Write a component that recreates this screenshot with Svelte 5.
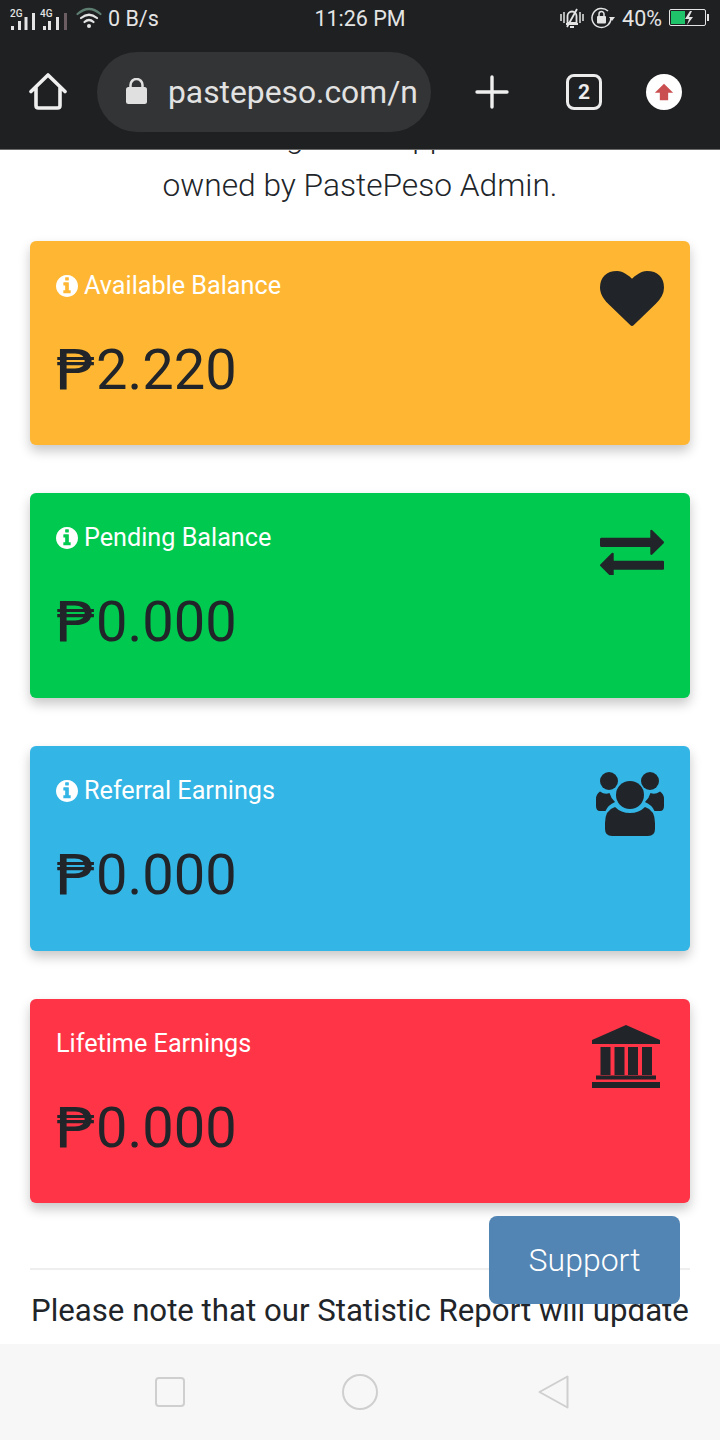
<script>
  const heart = "M896 1664q-26 0-44-18l-624-602q-10-8-27.5-26t-55.5-65.5-68-97.5-53.5-121-23.5-138q0-220 127-344t351-124q62 0 126.5 21.5t120 58 95.5 68.5 76 68q36-36 76-68t95.5-68.5 120-58 126.5-21.5q224 0 351 124t127 344q0 221-229 450l-623 600q-18 18-44 18z";
  const exchange = "M1792 1184v192q0 13-9.5 22.5t-22.5 9.5h-1376v192q0 13-9.5 22.5t-22.5 9.5q-12 0-24-10l-319-320q-9-9-9-22 0-14 9-23l320-320q9-9 23-9 13 0 22.5 9.5t9.5 22.5v192h1376q13 0 22.5 9.5t9.5 22.5zm0-544q0 14-9 23l-320 320q-9 9-23 9-13 0-22.5-9.5t-9.5-22.5v-192h-1376q-13 0-22.5-9.5t-9.5-22.5v-192q0-13 9.5-22.5t22.5-9.5h1376v-192q0-14 9-23t23-9q12 0 24 10l319 319q9 9 9 23z";
  const info = "M1152 1376v-160q0-14-9-23t-23-9h-96v-512q0-14-9-23t-23-9h-320q-14 0-23 9t-9 23v160q0 14 9 23t23 9h96v320h-96q-14 0-23 9t-9 23v160q0 14 9 23t23 9h448q14 0 23-9t9-23zm-128-896v-160q0-14-9-23t-23-9h-192q-14 0-23 9t-9 23v160q0 14 9 23t23 9h192q14 0 23-9t9-23zm640 416q0 209-103 385.5t-279.5 279.5-385.5 103-385.5-103-279.5-279.5-103-385.5 103-385.5 279.5-279.5 385.5-103 385.5 103 279.5 279.5 103 385.5z";
  const cards = [
    { cls: "amber", label: "Available Balance", value: "2.220", info: true, icon: "heart" },
    { cls: "green", label: "Pending Balance", value: "0.000", info: true, icon: "exchange" },
    { cls: "blue", label: "Referral Earnings", value: "0.000", info: true, icon: "users" },
    { cls: "red", label: "Lifetime Earnings", value: "0.000", info: false, icon: "bank" }
  ];
</script>

<div class="phone">
  <header class="chrome">
    <div class="status">
      <div class="status-left">
        <svg class="signal" width="58" height="28" viewBox="0 0 58 28" fill="#e4e4e4">
          <text x="0" y="13" class="net">2G</text>
          <rect x="1" y="22" width="3" height="4"/><rect x="8" y="17" width="3" height="9"/><rect x="14.500" y="13" width="3" height="13"/><rect x="22" y="9" width="3" height="17"/>
          <text x="30" y="13" class="net">4G</text>
          <rect x="33" y="22" width="3" height="4"/><rect x="38" y="17" width="3" height="9"/><rect x="46" y="13" width="3" height="13"/><rect x="54" y="9" width="3" height="17" fill="#6b5d61"/>
        </svg>
        <svg class="wifi" width="26" height="22" viewBox="0 0 26 22" fill="none" stroke-linecap="round">
          <path d="M1.500 7Q13-3 24.500 7" stroke="#5d7d71" stroke-width="2.200"/>
          <path d="M5 11Q13 4.500 21 11" stroke="#e4e4e4" stroke-width="2.200"/>
          <path d="M8.500 15Q13 11 17.500 15" stroke="#e4e4e4" stroke-width="2.200"/>
          <circle cx="13" cy="19" r="2" fill="#e4e4e4"/>
        </svg>
        <span class="speed">0 B/s</span>
      </div>
      <span class="time">11:26 PM</span>
      <div class="status-right">
        <svg width="24" height="22" viewBox="0 0 24 22" fill="none" stroke="#e4e4e4" stroke-width="1.800">
          <path d="M1 7v7M4 5v11M20 5v11M23 7v7" stroke-width="1.500"/>
          <path d="M7.500 16V9a4.500 4.500 0 0 1 9 0v7zM6 17h12M10 20h4M17 2L7 20"/>
        </svg>
        <svg width="24" height="22" viewBox="0 0 24 22" fill="none" stroke="#e4e4e4" stroke-width="1.500">
          <path d="M20 11a9.500 9.500 0 1 1-3-7M20 11a9.500 9.500 0 0 1-3 7"/>
          <path d="M18 10h6l-3 4z" fill="#e4e4e4" stroke="none"/>
          <rect x="6" y="9" width="9" height="7.500" rx="1" fill="#e4e4e4" stroke="none"/>
          <path d="M8 9V7a2.500 2.500 0 0 1 5 0v2"/>
        </svg>
        <span class="pct">40%</span>
        <svg width="41" height="20" viewBox="0 0 41 20">
          <rect x="0.500" y="1.500" width="36" height="16" rx="1.500" fill="none" stroke="#e4e4e4"/>
          <rect x="2" y="3" width="14" height="13" fill="#1ec36a"/>
          <path d="M21 3l-5 8h4l-2 6 6-8h-4l3-6z" fill="#e4e4e4"/>
          <rect x="38" y="6" width="2" height="7" fill="#e4e4e4"/>
        </svg>
      </div>
    </div>
    <div class="toolbar">
      <svg class="home" width="38" height="38" viewBox="0 0 38 38" fill="none" stroke="#efefef" stroke-width="3.600" stroke-linejoin="round" stroke-linecap="round">
        <path d="M2 18.500L19 2l17 16.500M7 14v18.500q0 2.500 2.500 2.500h19q2.500 0 2.500-2.500V14"/>
      </svg>
      <div class="pill">
        <svg width="21" height="27" viewBox="0 0 21 27" fill="#e0e0e0">
          <rect x="0" y="9" width="21" height="17" rx="2.500"/>
          <path d="M4.500 10V7a6 6 0 0 1 12 0v3" fill="none" stroke="#e0e0e0" stroke-width="2.500"/>
        </svg>
        <span class="url">pastepeso.com/n</span>
      </div>
      <svg class="plus" width="34" height="34" viewBox="0 0 34 34" stroke="#efefef" stroke-width="3.400" stroke-linecap="round"><path d="M17 2v30M2 17h30"/></svg>
      <div class="tabs">2</div>
      <div class="upgrade">
        <svg width="24" height="24" viewBox="0 0 24 24"><path d="M12 2l11 11h-6v9H7v-9H1z" fill="#c94f50"/></svg>
      </div>
    </div>
  </header>

  <main class="content">
    <p class="intro">The earnings are supported and<br/>owned by PastePeso Admin.</p>
    <div class="cards">
      {#each cards as c}
        <section class="card {c.cls}">
          <div class="card-text">
            <div class="label">
              {#if c.info}
                <svg class="info" viewBox="128 128 1536 1536" fill="#fff"><path d={info}/></svg>
              {/if}
              <span>{c.label}</span>
            </div>
            <div class="amount"><span class="peso">₱</span>{c.value}</div>
          </div>
          {#if c.icon === "heart"}
            <svg class="icon heart" viewBox="0 128 1792 1536" fill="#212529"><path d={heart}/></svg>
          {:else if c.icon === "exchange"}
            <svg class="icon exchange" viewBox="0 256 1792 1280" fill="#212529"><path d={exchange}/></svg>
          {:else if c.icon === "users"}
            <svg class="icon users" viewBox="0 0 68 64" fill="#212529">
              <circle cx="13" cy="9" r="9"/>
              <circle cx="54" cy="9" r="9"/>
              <circle cx="34" cy="23" r="14"/>
              <path d="M4 19.500q5 3.500 9.500 1.500q1.500 5.500 5.500 9q-7 3-9.500 9H4q-4 0-4-5v-7q0-5 4-7.500z"/>
              <path d="M64 19.500q-5 3.500-9.500 1.500q-1.500 5.500-5.500 9q7 3 9.500 9H64q4 0 4-5v-7q0-5-4-7.500z"/>
              <path d="M19 35q6 6 15 6t15-6q10 3 10 16v6q0 7-7 7H16q-7 0-7-7v-6q0-13 10-16z"/>
            </svg>
          {:else}
            <svg class="icon bank" viewBox="0 0 68 63" fill="#212529">
              <path d="M34 0L68 15v4H0v-4z"/>
              <rect x="8.500" y="22" width="10" height="28"/>
              <rect x="22.500" y="22" width="10" height="28"/>
              <rect x="36" y="22" width="10" height="28"/>
              <rect x="50" y="22" width="10" height="28"/>
              <rect x="4" y="50.500" width="60" height="4"/>
              <rect x="0" y="57" width="68" height="6"/>
            </svg>
          {/if}
        </section>
      {/each}
    </div>
    <hr />
    <p class="note">Please note that our Statistic Report will update</p>
    <button class="support">Support</button>
  </main>

  <footer class="nav">
    <svg width="32" height="32" viewBox="0 0 32 32" fill="none" stroke="#cfcfcf" stroke-width="2"><rect x="2" y="2" width="28" height="28" rx="3"/></svg>
    <svg class="circle" width="36" height="36" viewBox="0 0 36 36" fill="none" stroke="#cfcfcf" stroke-width="2"><circle cx="18" cy="18" r="17"/></svg>
    <svg width="33" height="36" viewBox="0 0 32 36" fill="none" stroke="#cfcfcf" stroke-width="2" stroke-linejoin="round"><path d="M30 2.500v31L2 18z"/></svg>
  </footer>
</div>

<style>
  :global(body) { margin: 0; background: #fff; }
  .phone {
    width: 720px; height: 1440px; display: flex; flex-direction: column; overflow: hidden;
    font-family: Roboto, "Liberation Sans", sans-serif; color: #212529;
  }
  .chrome { height: 150px; flex: none; background: #1e2022; border-bottom: 1px solid #6a6a6a; box-sizing: border-box; position: relative; z-index: 2; }
  .status { height: 36px; position: relative; display: flex; justify-content: space-between; align-items: center; padding: 0 10px 0 10px; color: #e4e4e4; font-size: 21.500px; }
  .status-left, .status-right { display: flex; align-items: center; }
  .signal { margin-right: 8px; }
  .net { font: 500 10px Roboto, sans-serif; }
  .speed { margin-left: 6px; }
  .time { position: absolute; left: 0; right: 0; text-align: center; }
  .status-right { gap: 7px; }
  .toolbar { height: 113px; display: flex; align-items: center; padding: 0 0 2px 29px; box-sizing: border-box; }
  .pill { width: 334px; height: 80px; margin-left: 30px; border-radius: 40px; background: #333435; display: flex; align-items: center; box-sizing: border-box; padding-left: 29px; gap: 21px; overflow: hidden; }
  .url { font-size: 31.800px; color: #e2e2e2; white-space: nowrap; }
  .plus { margin-left: 44px; }
  .tabs { width: 36px; height: 36px; margin-left: 57px; box-sizing: border-box; border: 3.500px solid #ececec; border-radius: 8px; color: #ececec; font-size: 21px; font-weight: 700; display: flex; align-items: center; justify-content: center; }
  .upgrade { width: 36px; height: 36px; margin-left: 44px; border-radius: 50%; background: #fff; display: flex; align-items: center; justify-content: center; }
  .upgrade svg { width: 20px; height: 20px; }

  .content { flex: 1; min-height: 0; overflow: hidden; position: relative; padding: 0 30px; }
  .intro { margin: -36px 0 0; text-align: center; font-size: 31.700px; font-weight: 300; line-height: 48px; white-space: nowrap; }
  .cards { margin-top: 30.700px; display: flex; flex-direction: column; gap: 48px; }
  .card { height: 204.670px; box-sizing: border-box; border-radius: 6px; padding: 27px 26px 0; display: flex; justify-content: space-between; align-items: flex-start; box-shadow: 0 6px 12px rgba(0,0,0,.22); }
  .amber { background: #ffb733; }
  .green { background: #00c94f; }
  .blue { background: #33b5e5; }
  .red { background: #ff3547; }
  .label { display: flex; align-items: center; gap: 6px; color: #fff; font-size: 25.200px; line-height: 36px; }
  .info { width: 22px; height: 22px; }
  .amount { margin-top: 33px; font-size: 56px; line-height: 66px; white-space: nowrap; display: flex; align-items: baseline; }
  .peso { display: inline-block; width: 41px; margin-left: -1px; font-family: "DejaVu Sans", sans-serif; font-size: 56px; transform: scaleX(1.200); transform-origin: 0 50%; }
  .icon { flex: none; margin-top: -1px; }
  .heart { width: 64px; height: 55px; margin-top: 3px; }
  .exchange { width: 64px; height: 47px; margin-top: 8px; }
  .users { width: 68px; height: 64px; }
  .bank { width: 68px; height: 63px; margin-right: 4px; }
  hr { margin: 64.300px 0 0; border: 0; border-top: 2px solid #eee; }
  .note { margin: 22px 0 0 1px; font-size: 31.200px; line-height: 38px; white-space: nowrap; }
  .support { position: absolute; left: 489px; top: 1066px; width: 191px; height: 88px; border: 0; border-radius: 8px; background: #5285b3; color: #fff; font: 300 32px Roboto, sans-serif; }
  .nav { height: 96px; flex: none; background: #f7f7f7; display: flex; align-items: center; box-sizing: border-box; padding: 0 150px 0 154px; justify-content: space-between; }
  .circle { margin-right: 3px; }
</style>
